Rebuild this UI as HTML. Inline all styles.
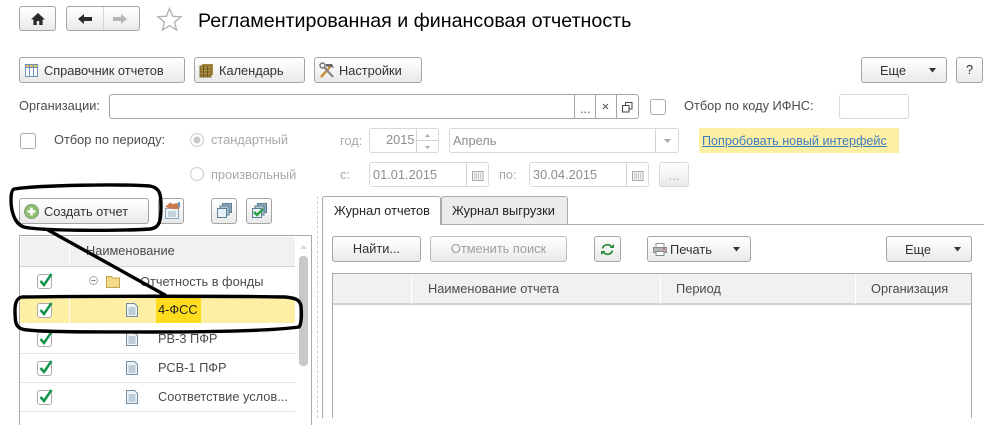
<!DOCTYPE html>
<html lang="ru"><head><meta charset="utf-8"><title>Регламентированная и финансовая отчетность</title>
<style>
html,body{margin:0;padding:0;background:#fff}
body{width:984px;height:418px;position:relative;overflow:hidden;font:12.8px/14px "Liberation Sans",Arial,sans-serif;color:#4b4b4b}
.a,.t,.b,.i,.c{position:absolute;box-sizing:border-box}
.t{white-space:nowrap;line-height:14px}
.b{border:1px solid #a5a5a5;border-radius:3px;background:linear-gradient(#fff,#f5f5f5 50%,#e9e9e9);color:#333;text-align:center;line-height:23px;white-space:nowrap}
.i{border:1px solid #a5a5a5;border-radius:3px;background:#fff}
.d{border-color:#d8d8d8}
.c{width:16px;height:16px;border:1px solid #ababab;border-radius:3px;background:#fff}
.g{color:#a9a9a9}
.l{position:absolute;background:#d4d4d4}
svg{position:absolute;overflow:visible}
</style></head><body>

<!-- top nav -->
<div class="b" style="left:19px;top:6px;width:37px;height:25px"></div>
<svg style="left:30px;top:12px" width="16" height="14"><path d="M8 1 1 7.5h2.400V13h3.400V9h2.400v4h3.400V7.500H15z" fill="#2a2a2a"/></svg>
<div class="b" style="left:66px;top:6px;width:74px;height:25px"></div>
<div class="l" style="left:103px;top:7px;width:1px;height:23px"></div>
<svg style="left:77px;top:13px" width="16" height="12"><path d="M1 6 7 1v3h8v4H7v3z" fill="#2a2a2a"/></svg>
<svg style="left:112px;top:13px" width="16" height="12"><path d="M15 6 9 1v3H1v4h8v3z" fill="#b5b5b5"/></svg>
<svg style="left:157px;top:7px" width="25" height="24"><path d="M12.500 1.500 15.600 9.200 24 9.800 17.500 15.100 19.600 23 12.500 18.700 5.400 23 7.500 15.100 1 9.800 9.400 9.200z" fill="#fff" stroke="#b4b4b4" stroke-width="1.400"/></svg>
<div class="t" style="left:198px;top:9px;font-size:19.65px;line-height:24px;color:#000">Регламентированная и финансовая отчетность</div>

<!-- toolbar -->
<div class="b" style="left:19px;top:57px;width:166px;height:26px"></div>
<svg style="left:25px;top:64px" width="13" height="13"><path d="M.5.5h12v12H.5z" fill="#fff" stroke="#6d93b8"/><path d="M.5.5h12v3H.5z" fill="#e9c25f" stroke="#6d93b8"/><path d="M4.500 1v11M8.500 1v11" stroke="#6d93b8"/></svg>
<div class="t" style="left:44px;top:64px;color:#333">Справочник отчетов</div>
<div class="b" style="left:194px;top:57px;width:111px;height:26px"></div>
<svg style="left:200px;top:63px" width="14" height="15"><path d="M2 1h11v11H2z" fill="#a68a3f"/><path d="M0 3h11v11H0z" fill="#b59748" stroke="#7c6528"/><path d="M0 6h11M0 9h11M0 12h11M3.500 3v11M7.500 3v11" stroke="#6f5a22"/></svg>
<div class="t" style="left:219px;top:64px;color:#333">Календарь</div>
<div class="b" style="left:314px;top:57px;width:108px;height:26px"></div>
<svg style="left:319px;top:62px" width="16" height="16"><path d="M2 15 11 5" stroke="#c98a2c" stroke-width="2.400"/><path d="M14 15 5 5" stroke="#8a8a8a" stroke-width="2.400"/><path d="M7 2h6l2 4-3-1-5-.5z" fill="#666"/><circle cx="3.500" cy="3.500" r="2.500" fill="none" stroke="#777" stroke-width="1.500"/></svg>
<div class="t" style="left:339px;top:64px;color:#333">Настройки</div>
<div class="b" style="left:861px;top:57px;width:86px;height:26px"></div>
<div class="t" style="left:880px;top:64px;color:#333">Еще</div>
<svg style="left:928px;top:68px" width="9" height="5"><path d="M1 0h7L4.500 4.500z" fill="#333"/></svg>
<div class="b" style="left:956px;top:57px;width:27px;height:26px;line-height:23px">?</div>

<!-- organisations -->
<div class="t" style="left:19px;top:99px">Организации:</div>
<div class="i" style="left:109px;top:94px;width:530px;height:25px"></div>
<div class="l" style="left:574px;top:95px;width:1px;height:23px;background:#a5a5a5"></div>
<div class="l" style="left:595px;top:95px;width:1px;height:23px;background:#a5a5a5"></div>
<div class="l" style="left:616px;top:95px;width:1px;height:23px;background:#a5a5a5"></div>
<div class="t" style="left:580px;top:102px;color:#555">...</div>
<svg style="left:602px;top:103px" width="7" height="7"><path d="M1 1l5 5M6 1 1 6" stroke="#555"/></svg>
<svg style="left:622px;top:102px" width="11" height="11"><path d="M3.500 3.500v-3h6.500v6.500h-3M.5 3.500h6.500V10H.5z" fill="none" stroke="#444"/></svg>
<div class="c" style="left:650px;top:99px"></div>
<div class="t" style="left:684px;top:99px">Отбор по коду ИФНС:</div>
<div class="i d" style="left:839px;top:94px;width:70px;height:25px"></div>

<!-- period row 1 -->
<div class="c" style="left:20px;top:133px"></div>
<div class="t" style="left:54px;top:133px">Отбор по периоду:</div>
<svg style="left:189px;top:132px" width="16" height="16"><circle cx="8" cy="8" r="6.500" fill="#fff" stroke="#d4d4d4" stroke-width="1.300"/><circle cx="8" cy="8" r="3.500" fill="#c9c9c9"/></svg>
<div class="t g" style="left:211px;top:133px">стандартный</div>
<div class="t g" style="left:340px;top:134px">год:</div>
<div class="i d" style="left:369px;top:128px;width:70px;height:25px"></div>
<div class="t g" style="left:386px;top:133px;color:#8e8e8e">2015</div>
<div class="l" style="left:416px;top:129px;width:1px;height:23px"></div>
<div class="l" style="left:417px;top:140px;width:21px;height:1px"></div>
<svg style="left:425px;top:134px" width="5" height="16"><path d="M0 3h5L2.500 0zM0 12h5L2.500 15z" fill="#a8a8a8"/></svg>
<div class="i d" style="left:449px;top:128px;width:230px;height:25px"></div>
<div class="t g" style="left:453px;top:134px;color:#8e8e8e">Апрель</div>
<div class="l" style="left:655px;top:129px;width:1px;height:23px"></div>
<svg style="left:664px;top:139px" width="7" height="4"><path d="M0 0h7L3.500 4z" fill="#a8a8a8"/></svg>
<div class="a" style="left:699px;top:128px;width:200px;height:25px;background:#fdf0a5"></div>
<div class="t" style="left:702px;top:134px;font-size:12.6px;color:#3f7cbf;text-decoration:underline">Попробовать новый интерфейс</div>

<!-- period row 2 -->
<svg style="left:189px;top:166px" width="16" height="16"><circle cx="8" cy="8" r="6.500" fill="#fff" stroke="#d4d4d4" stroke-width="1.300"/></svg>
<div class="t g" style="left:211px;top:168px">произвольный</div>
<div class="t g" style="left:340px;top:168px">с:</div>
<div class="i d" style="left:369px;top:162px;width:120px;height:25px"></div>
<div class="t g" style="left:373px;top:168px;color:#8e8e8e">01.01.2015</div>
<div class="l" style="left:466px;top:163px;width:1px;height:23px"></div>
<svg style="left:472px;top:171px" width="12" height="10"><path d="M.5.500h10.500v9H.5z" fill="#f4f4f4" stroke="#a8a8a8"/><path d="M2 3h8M2 5h8M2 7h8" stroke="#999" stroke-dasharray="1 1"/></svg>
<div class="t g" style="left:499px;top:168px">по:</div>
<div class="i d" style="left:529px;top:162px;width:120px;height:25px"></div>
<div class="t g" style="left:533px;top:168px;color:#8e8e8e">30.04.2015</div>
<div class="l" style="left:626px;top:163px;width:1px;height:23px"></div>
<svg style="left:632px;top:171px" width="12" height="10"><path d="M.5.500h10.500v9H.5z" fill="#f4f4f4" stroke="#a8a8a8"/><path d="M2 3h8M2 5h8M2 7h8" stroke="#999" stroke-dasharray="1 1"/></svg>
<div class="b d" style="left:659px;top:162px;width:30px;height:25px;color:#aaa;line-height:26px">...</div>

<!-- left pane toolbar -->
<div class="b" style="left:19px;top:198px;width:130px;height:26px"></div>
<svg style="left:24px;top:204px" width="15" height="15"><circle cx="7.500" cy="7.500" r="7" fill="#8fbf70" stroke="#7f9f6c"/><path d="M7.500 3.500v8M3.500 7.500h8" stroke="#fff" stroke-width="2.600"/></svg>
<div class="t" style="left:44px;top:205px;color:#333">Создать отчет</div>
<div class="b" style="left:158px;top:198px;width:26px;height:26px"></div>
<svg style="left:164px;top:201px" width="16" height="18"><path d="M1.500 7.500h13v10h-13z" fill="#eef3f7" stroke="#8aa4b8"/><path d="M4 11h8M4 13h8M4 15h8" stroke="#9db2c2"/><path d="M1 6 6 1.500 9 3 13 2l3 3-1 3H8L5 7z" fill="#c9794a"/><path d="M14 1h2v5h-2z" fill="#5b9bd0"/></svg>
<div class="b" style="left:211px;top:198px;width:26px;height:26px"></div>
<svg style="left:217px;top:203px" width="15" height="15"><path d="M5.500.5h9v9h-9z" fill="#90a8b8" stroke="#5e7f95"/><path d="M3 3h9v9H3z" fill="#b0c5d3" stroke="#5e7f95"/><path d="M.5 5.500h9v9h-9z" fill="#e8f1f7" stroke="#5e7f95"/></svg>
<div class="b" style="left:246px;top:198px;width:26px;height:26px"></div>
<svg style="left:252px;top:203px" width="15" height="15"><path d="M5.500.5h9v9h-9z" fill="#90a8b8" stroke="#5e7f95"/><path d="M3 3h9v9H3z" fill="#b0c5d3" stroke="#5e7f95"/><path d="M.5 5.500h9v9h-9z" fill="#e8f1f7" stroke="#5e7f95"/><path d="M2 9l3 3 6-6" fill="none" stroke="#2ea043" stroke-width="2.400"/></svg>

<!-- left table -->
<div class="a" style="left:19px;top:235px;width:293px;height:190px;border:1px solid #ababab;border-bottom:0"></div>
<div class="a" style="left:21px;top:237px;width:48px;height:29px;background:#f1f1f1"></div>
<div class="a" style="left:70px;top:237px;width:225px;height:29px;background:#f1f1f1"></div>
<div class="l" style="left:20px;top:266px;width:275px;height:1px"></div>
<div class="t" style="left:86px;top:244px">Наименование</div>
<div class="l" style="left:20px;top:296px;width:275px;height:1px;background:#e4e4e4"></div>
<div class="a" style="left:20px;top:297px;width:275px;height:26px;background:#fdf0a5"></div>
<div class="a" style="left:69px;top:297px;width:1px;height:26px;background:#fff"></div>
<div class="a" style="left:156px;top:297px;width:45px;height:26px;background:#ffdc1e"></div>
<div class="l" style="left:20px;top:353px;width:275px;height:1px;background:#e4e4e4"></div>
<div class="l" style="left:20px;top:382px;width:275px;height:1px;background:#e4e4e4"></div>
<div class="l" style="left:20px;top:411px;width:275px;height:1px;background:#e4e4e4"></div>

<div class="c" style="left:37px;top:274px;width:15px;height:15px"></div>
<svg style="left:38px;top:272px" width="16" height="16"><path d="M2.500 9 6 13 13.500 2" fill="none" stroke="#11944a" stroke-width="2.500"/></svg>
<div class="c" style="left:37px;top:303px;width:15px;height:15px"></div>
<svg style="left:38px;top:301px" width="16" height="16"><path d="M2.500 9 6 13 13.500 2" fill="none" stroke="#11944a" stroke-width="2.500"/></svg>
<div class="c" style="left:37px;top:332px;width:15px;height:15px"></div>
<svg style="left:38px;top:330px" width="16" height="16"><path d="M2.500 9 6 13 13.500 2" fill="none" stroke="#11944a" stroke-width="2.500"/></svg>
<div class="c" style="left:37px;top:361px;width:15px;height:15px"></div>
<svg style="left:38px;top:359px" width="16" height="16"><path d="M2.500 9 6 13 13.500 2" fill="none" stroke="#11944a" stroke-width="2.500"/></svg>
<div class="c" style="left:37px;top:390px;width:15px;height:15px"></div>
<svg style="left:38px;top:388px" width="16" height="16"><path d="M2.500 9 6 13 13.500 2" fill="none" stroke="#11944a" stroke-width="2.500"/></svg>

<svg style="left:89px;top:276px" width="9" height="9"><circle cx="4.500" cy="4.500" r="4" fill="#fff" stroke="#aaa"/><path d="M2.500 4.500h4" stroke="#777"/></svg>
<svg style="left:106px;top:275px" width="14" height="13"><path d="M.5 2.500V1.500h5l1 1.500h7v9.500H.5z" fill="#f2d98c" stroke="#c9a24a"/></svg>
<div class="t" style="left:140px;top:275px">Отчетность в фонды</div>

<svg style="left:126px;top:303px" width="12" height="14"><path d="M.5.500h8l3 3v10H.5z" fill="#eef3f7" stroke="#6f8ea6"/><path d="M2.500 5h7M2.500 7h7M2.500 9h7M2.500 11h7" stroke="#8fa8bb"/></svg>
<div class="t" style="left:158px;top:303px;color:#222">4-ФСС</div>
<svg style="left:126px;top:332px" width="12" height="14"><path d="M.5.500h8l3 3v10H.5z" fill="#eef3f7" stroke="#6f8ea6"/><path d="M2.500 5h7M2.500 7h7M2.500 9h7M2.500 11h7" stroke="#8fa8bb"/></svg>
<div class="t" style="left:158px;top:332px">РВ-3 ПФР</div>
<svg style="left:126px;top:361px" width="12" height="14"><path d="M.5.500h8l3 3v10H.5z" fill="#eef3f7" stroke="#6f8ea6"/><path d="M2.500 5h7M2.500 7h7M2.500 9h7M2.500 11h7" stroke="#8fa8bb"/></svg>
<div class="t" style="left:158px;top:361px">РСВ-1 ПФР</div>
<svg style="left:126px;top:390px" width="12" height="14"><path d="M.5.500h8l3 3v10H.5z" fill="#eef3f7" stroke="#6f8ea6"/><path d="M2.500 5h7M2.500 7h7M2.500 9h7M2.500 11h7" stroke="#8fa8bb"/></svg>
<div class="t" style="left:158px;top:390px">Соответствие услов...</div>

<svg style="left:300px;top:245px" width="7" height="4"><path d="M0 4h7L3.500 0z" fill="#d8d8d8"/></svg>
<div class="a" style="left:299px;top:256px;width:9px;height:110px;background:#c8c8c8;border-radius:4px"></div>
<div class="a" style="left:317px;top:196px;width:0;height:222px;border-left:1px dashed #d0d0d0"></div>

<!-- right pane tabs -->
<div class="a" style="left:322px;top:224px;width:662px;height:194px;border-top:1px solid #ababab;border-left:1px solid #ababab"></div>
<div class="a" style="left:322px;top:196px;width:119px;height:29px;background:#fff;border:1px solid #ababab;border-bottom:0;border-radius:3px 3px 0 0"></div>
<div class="a" style="left:441px;top:196px;width:127px;height:29px;background:#ebebeb;border:1px solid #ababab;border-radius:3px 3px 0 0"></div>
<div class="t" style="left:334px;top:204px;color:#222">Журнал отчетов</div>
<div class="t" style="left:452px;top:204px;color:#222">Журнал выгрузки</div>

<!-- right pane buttons -->
<div class="b" style="left:332px;top:236px;width:89px;height:26px">Найти...</div>
<div class="b d" style="left:430px;top:236px;width:137px;height:26px;color:#a0a0a0;border-color:#bbb">Отменить поиск</div>
<div class="b" style="left:594px;top:236px;width:27px;height:26px"></div>
<svg style="left:600px;top:243px" width="15" height="13"><path d="M2.500 5.500a5 5 0 0 1 9-1.500" fill="none" stroke="#2d8a3e" stroke-width="1.700"/><path d="M12.500 7.500a5 5 0 0 1-9 1.500" fill="none" stroke="#2d8a3e" stroke-width="1.700"/><path d="M9.500 5H14V1zM5.500 8H1v4z" fill="#2d8a3e"/></svg>
<div class="b" style="left:647px;top:236px;width:104px;height:26px"></div>
<svg style="left:653px;top:243px" width="14" height="13"><path d="M3 .5h8v4H3z" fill="#fff" stroke="#999"/><path d="M.5 4.500h13v5H.5z" fill="#b3b3b3" stroke="#8a8a8a"/><path d="M3 8.500h8v4H3z" fill="#fff" stroke="#8a8a8a"/><path d="M10 6h2" stroke="#c9493a"/></svg>
<div class="t" style="left:670px;top:243px;color:#333">Печать</div>
<svg style="left:732px;top:247px" width="9" height="5"><path d="M1 0h7L4.500 4.500z" fill="#333"/></svg>
<div class="b" style="left:886px;top:236px;width:86px;height:26px"></div>
<div class="t" style="left:905px;top:243px;color:#333">Еще</div>
<svg style="left:953px;top:247px" width="9" height="5"><path d="M1 0h7L4.500 4.500z" fill="#333"/></svg>

<!-- right table -->
<div class="a" style="left:332px;top:273px;width:640px;height:145px;border:1px solid #ababab;border-bottom:0"></div>
<div class="a" style="left:333px;top:274px;width:638px;height:29px;background:#f1f1f1"></div>
<div class="l" style="left:333px;top:303px;width:638px;height:2px;background:#d0d0d0"></div>
<div class="l" style="left:411px;top:274px;width:1px;height:30px;background:#fff"></div>
<div class="l" style="left:660px;top:274px;width:1px;height:30px;background:#fff"></div>
<div class="l" style="left:855px;top:274px;width:1px;height:30px;background:#fff"></div>
<div class="t" style="left:428px;top:282px">Наименование отчета</div>
<div class="t" style="left:676px;top:282px">Период</div>
<div class="t" style="left:871px;top:282px">Организация</div>

<!-- annotation -->
<svg style="left:0;top:0" width="984" height="418"><g fill="none" stroke="#000" stroke-width="3.400" stroke-linejoin="round" stroke-linecap="round">
<path d="M14 189C40 185 120 184 150 186 160 188 161 194 161 206 161 220 160 228 150 229 120 231 40 231 24 227 14 224 11 210 11 200 11 194 12 190 14 189z"/>
<path d="M48 230 165 295"/>
<path d="M22 297C70 296 240 296 285 297 296 298 300 300 301 306 302 316 301 325 299 327 270 331 200 332 150 332 90 332 30 332 22 329 15 327 15 320 15 310 15 302 17 298 22 297z"/>
</g></svg>
</body></html>
